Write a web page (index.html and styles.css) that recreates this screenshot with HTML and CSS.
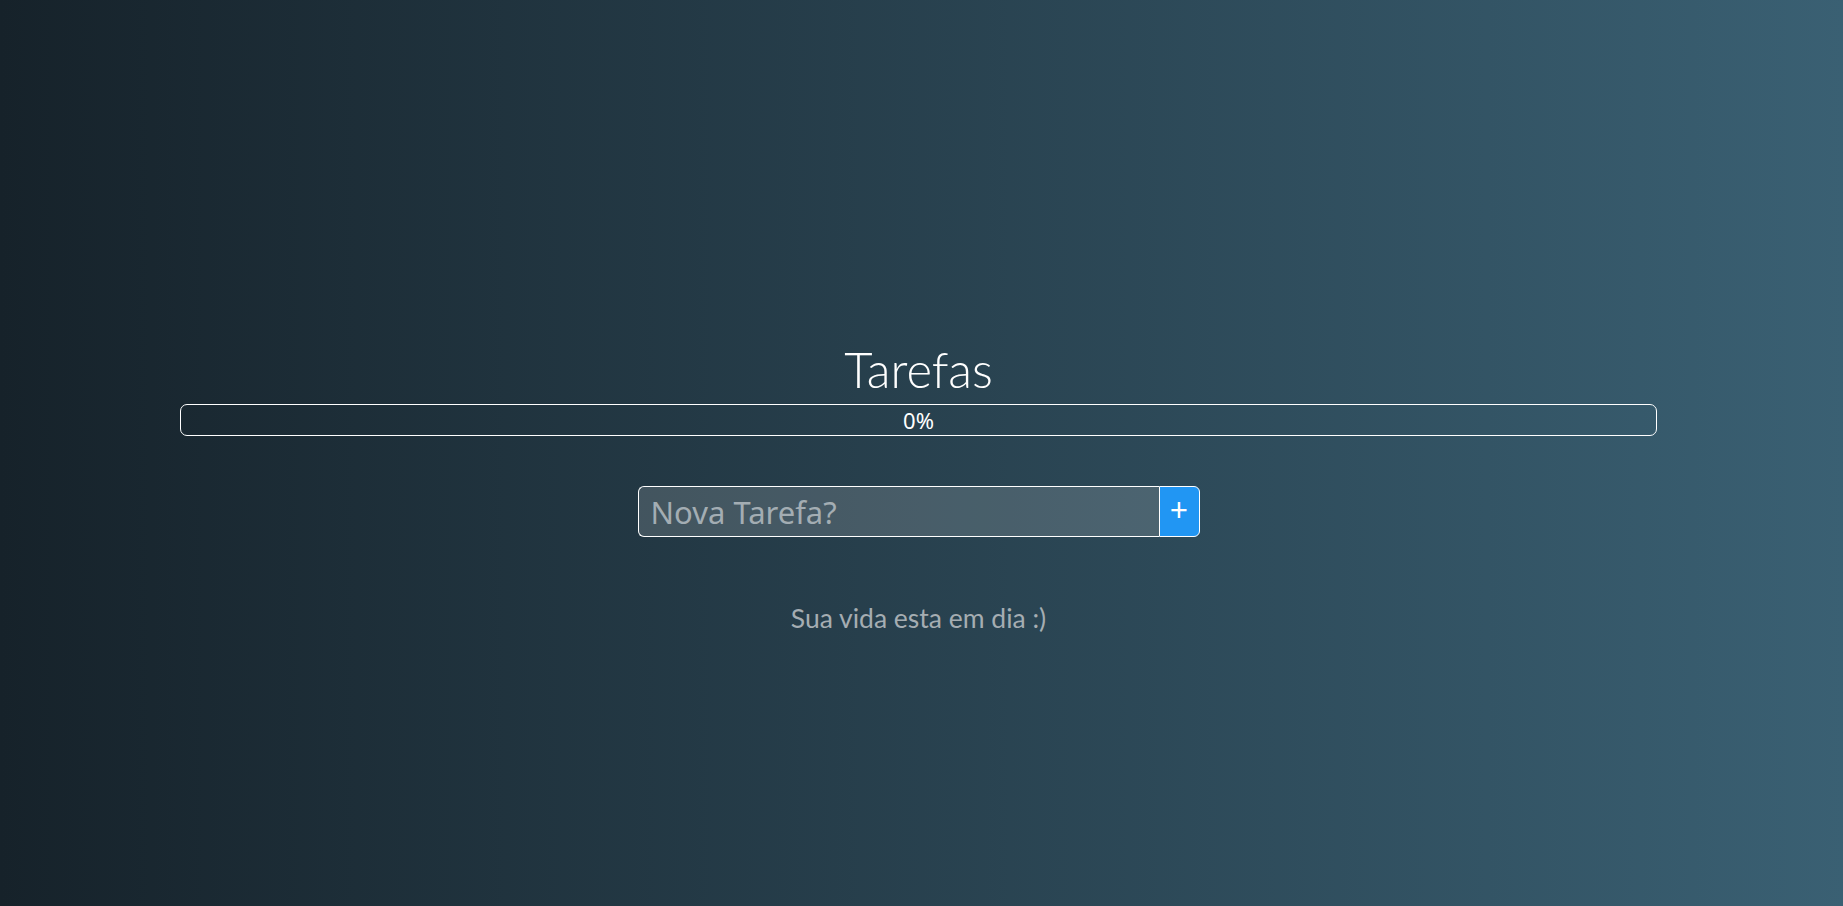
FILE: index.html
```html
<!DOCTYPE html>
<html lang="pt">
<head>
<meta charset="utf-8">
<title>Tarefas</title>
<link rel="stylesheet" href="styles.css">
</head>
<body>
<main class="app">
  <h1 class="title">Tarefas</h1>
  <div class="progress"><span class="progress-label">0%</span></div>
  <form class="new-task">
    <input class="new-task-input" type="text" placeholder="Nova Tarefa?">
    <button class="new-task-btn" type="button">+</button>
  </form>
  <p class="empty">Sua vida esta em dia :)</p>
</main>
</body>
</html>
```
FILE: styles.css
```css
html, body {
  margin: 0;
  padding: 0;
  height: 100%;
}
body {
  background: linear-gradient(to right, #16222a, #3a6073);
  font-family: "Lato", "Liberation Sans", sans-serif;
  color: #fff;
}
.app {
  box-sizing: border-box;
  height: 100%;
  margin-right: 6px;
  padding-top: 341px;
  display: flex;
  flex-direction: column;
  align-items: center;
}
.title {
  margin: 0;
  font-family: "Lato", sans-serif;
  font-weight: 300;
  font-size: 49px;
  line-height: 57px;
}
.progress {
  box-sizing: border-box;
  margin-top: 6px;
  width: 1477px;
  height: 32px;
  border: 1px solid #fff;
  border-radius: 7px;
  display: flex;
  align-items: center;
  justify-content: center;
}
.progress-label {
  font-family: "Noto Sans", "Open Sans", sans-serif;
  font-size: 22px;
  line-height: 1;
  color: #fff;
}
.new-task {
  margin: 50px 0 0;
  display: flex;
  width: 562px;
  height: 51px;
}
.new-task-input {
  box-sizing: border-box;
  flex: 1;
  min-width: 0;
  height: 100%;
  margin: 0;
  padding: 0 12px;
  border: 1px solid #fff;
  border-right: none;
  border-radius: 6px 0 0 6px;
  background: rgba(255, 255, 255, 0.15);
  font-family: "Noto Sans", "Open Sans", sans-serif;
  font-size: 31px;
  color: #fff;
  outline: none;
}
.new-task-input::placeholder {
  color: #a3adb3;
}
.new-task-btn {
  box-sizing: border-box;
  width: 41px;
  height: 100%;
  margin: 0;
  padding: 0 0 3px;
  border: 1px solid #fff;
  border-radius: 0 6px 6px 0;
  background: #2196f3;
  color: #fff;
  font-family: "Noto Sans", sans-serif;
  font-size: 32px;
  line-height: 1;
  cursor: pointer;
}
.empty {
  margin: 67px 0 0;
  font-family: "Lato", sans-serif;
  font-size: 26.5px;
  line-height: 29px;
  color: #a5adb2;
}
```
